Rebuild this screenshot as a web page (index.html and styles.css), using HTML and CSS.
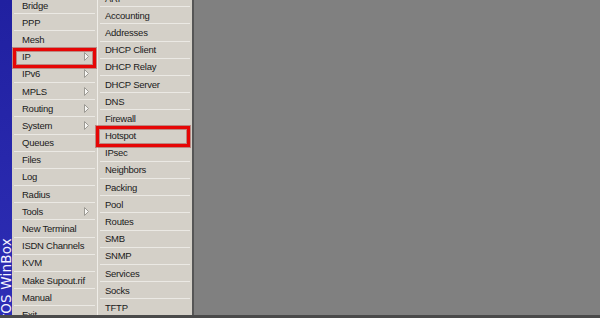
FILE: index.html
```html
<!doctype html>
<html lang="en">
<head>
    <meta charset="UTF-8">
    <title>WinBox</title>
    <link rel="stylesheet" href="styles.css">
</head>
<body>
<div class="screen">
    <div class="desk">
        <div class="brand"><span>RouterOS WinBox</span></div>
        <ul class="menu main">
            <li>Bridge</li>
            <li>PPP</li>
            <li>Mesh</li>
            <li class="picked">IP <svg class="more" width="5" height="9" viewBox="0 0 5 9"><path d="M0.5 0.5 L4.5 4.5 L0.5 8.5 Z" fill="#f6f5f2" stroke="#9c9a94" stroke-width="1"/></svg></li>
            <li>IPv6 <svg class="more" width="5" height="9" viewBox="0 0 5 9"><path d="M0.5 0.5 L4.5 4.5 L0.5 8.5 Z" fill="#f6f5f2" stroke="#9c9a94" stroke-width="1"/></svg></li>
            <li>MPLS <svg class="more" width="5" height="9" viewBox="0 0 5 9"><path d="M0.5 0.5 L4.5 4.5 L0.5 8.5 Z" fill="#f6f5f2" stroke="#9c9a94" stroke-width="1"/></svg></li>
            <li>Routing <svg class="more" width="5" height="9" viewBox="0 0 5 9"><path d="M0.5 0.5 L4.5 4.5 L0.5 8.5 Z" fill="#f6f5f2" stroke="#9c9a94" stroke-width="1"/></svg></li>
            <li>System <svg class="more" width="5" height="9" viewBox="0 0 5 9"><path d="M0.5 0.5 L4.5 4.5 L0.5 8.5 Z" fill="#f6f5f2" stroke="#9c9a94" stroke-width="1"/></svg></li>
            <li>Queues</li>
            <li>Files</li>
            <li>Log</li>
            <li>Radius</li>
            <li>Tools <svg class="more" width="5" height="9" viewBox="0 0 5 9"><path d="M0.5 0.5 L4.5 4.5 L0.5 8.5 Z" fill="#f6f5f2" stroke="#9c9a94" stroke-width="1"/></svg></li>
            <li>New Terminal</li>
            <li>ISDN Channels</li>
            <li>KVM</li>
            <li>Make Supout.rif</li>
            <li>Manual</li>
            <li>Exit</li>
        </ul>
        <ul class="menu submenu">
            <li>ARP</li>
            <li>Accounting</li>
            <li>Addresses</li>
            <li>DHCP Client</li>
            <li>DHCP Relay</li>
            <li>DHCP Server</li>
            <li>DNS</li>
            <li>Firewall</li>
            <li class="picked">Hotspot</li>
            <li>IPsec</li>
            <li>Neighbors</li>
            <li>Packing</li>
            <li>Pool</li>
            <li>Routes</li>
            <li>SMB</li>
            <li>SNMP</li>
            <li>Services</li>
            <li>Socks</li>
            <li>TFTP</li>
        </ul>
        <div class="workspace"></div>
    </div>
    <div class="edge"></div>
</div>
</body>
</html>
```

FILE: styles.css
```css
* {
    margin: 0;
    padding: 0;
    list-style: none;
    box-sizing: border-box;
}

body {
    background: #808080;
    font-family: "Liberation Sans", Arial, sans-serif;
    font-size: 9.5px;
    letter-spacing: -0.25px;
    color: #1a1a1a;
    overflow: hidden;
}

.screen {
    width: 600px;
    height: 318px;
    display: flex;
    flex-direction: column;
}

.desk {
    flex: 1;
    min-height: 0;
    display: flex;
    overflow: hidden;
}

.edge {
    height: 3px;
    background: #4a4a4a;
}

.brand {
    flex: none;
    width: 12px;
    padding-top: 238px;
    overflow: hidden;
    background: linear-gradient(#2020a0, #2e2eb6);
}

.brand span {
    display: block;
    writing-mode: vertical-rl;
    transform: rotate(180deg);
    font-family: "DejaVu Sans", Verdana, sans-serif;
    font-size: 13.5px;
    letter-spacing: 0.2px;
    line-height: 12px;
    color: #f4f4ff;
    white-space: nowrap;
}

.menu {
    flex: none;
    background: #d4d0c8;
}

.main {
    width: 85px;
    margin-top: -3px;
}

.submenu {
    width: 97px;
    margin-top: -10px;
    border-left: 1px solid #efede8;
    border-right: 2px solid #565656;
}

.menu li {
    position: relative;
    display: flex;
    align-items: center;
    height: 17.2px;
    margin: 0 2px;
    padding-left: 8px;
    padding-right: 6px;
    border-bottom: 1px solid #ebe9e4;
    white-space: nowrap;
}

.submenu li {
    padding-left: 5px;
}

.more {
    margin-left: auto;
}

.picked::after {
    content: "";
    position: absolute;
    top: -1px;
    bottom: -3px;
    left: -1px;
    right: -1px;
    border: 3px solid #e60606;
    box-shadow: 0 0 0 1px rgba(140, 0, 0, 0.35), inset 0 0 0 1px rgba(140, 0, 0, 0.35);
}

.submenu .picked::after {
    top: -2px;
    left: -4px;
    right: 0;
}

.workspace {
    flex: 1;
}
```
